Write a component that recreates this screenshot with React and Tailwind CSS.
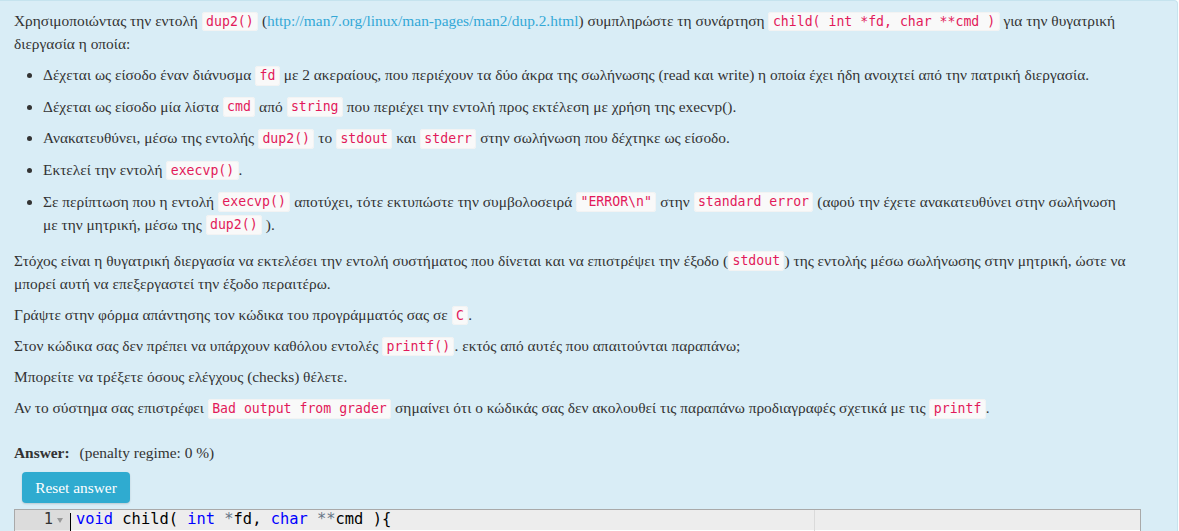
const C = ({ children }) => (
  <code className="whitespace-nowrap rounded-[3px] border border-[#f3f3f3] bg-[#f9f9f9] px-[3.4px] py-[1.4px] font-['DejaVu_Sans_Mono',monospace] text-[13.2px] leading-[14px] text-[#e2195a]">
    {children}
  </code>
);

const items = [
  <>
    Δέχεται ως είσοδο έναν διάνυσμα <C>fd</C> με 2 ακεραίους, που περιέχουν τα δύο άκρα της σωλήνωσης (read και write) η οποία έχει ήδη ανοιχτεί από την πατρική διεργασία.
  </>,
  <>
    Δέχεται ως είσοδο μία λίστα <C>cmd</C> από <C>string</C> που περιέχει την εντολή προς εκτέλεση με χρήση της execvp().
  </>,
  <>
    Ανακατευθύνει, μέσω της εντολής <C>dup2()</C> το <C>stdout</C> και <C>stderr</C> στην σωλήνωση που δέχτηκε ως είσοδο.
  </>,
  <>
    Εκτελεί την εντολή <C>execvp()</C>.
  </>,
  <>
    Σε περίπτωση που η εντολή <C>execvp()</C> αποτύχει, τότε εκτυπώστε την συμβολοσειρά <C>"ERROR\n"</C> στην <C>standard error</C> (αφού την έχετε ανακατευθύνει στην σωλήνωση με την μητρική, μέσω της <C>dup2()</C> ).
  </>,
];

const CodeEditor = () => (
  <div className="relative mt-[6px] h-[30px] w-[1127px] border-l border-t border-r border-[#a9a9a9] bg-white font-['DejaVu_Sans_Mono',monospace] text-[15.4px]">
    <div className="flex h-full">
      <div className="flex w-[55px] flex-col bg-[#ebebeb]">
        <div className="flex h-[19.5px] items-center justify-end bg-[#dcdcdc] pr-[4px] text-[#333]">
          <span className="leading-none">1</span>
          <svg width="12" height="10" viewBox="0 0 12 10" className="ml-[1px]">
            <path d="M3 3 L9 3 L6 8 Z" fill="#999" />
          </svg>
        </div>
      </div>
      <div className="relative flex-1">
        <div className="flex h-[19.5px] items-center bg-[#ededed] pl-[6px] leading-none text-black">
          <span className="text-[#0000ff]">void</span>
          <span className="whitespace-pre"> child( </span>
          <span className="text-[#0000ff]">int</span>
          <span className="whitespace-pre"> </span>
          <span className="text-[#687687]">*</span>
          <span className="whitespace-pre">fd, </span>
          <span className="text-[#0000ff]">char</span>
          <span className="whitespace-pre"> </span>
          <span className="text-[#687687]">**</span>
          <span className="whitespace-pre">cmd ){"{"}</span>
        </div>
        <div className="absolute left-0 top-[3px] h-[30px] w-px bg-black" />
        <div className="absolute left-[744px] top-0 h-full w-px bg-[#dadada]" />
      </div>
    </div>
  </div>
);

export default function App() {
  return (
    <div className="h-[531px] w-[1179px] overflow-hidden bg-white">
      <div className="h-[560px] w-[1178px] rounded-tr-[4px] border-r border-t border-[#c5e3ee] bg-[#d9edf6] pb-4 pl-[14px] pr-[48px] pt-[8px] font-['Liberation_Serif',serif] text-[15.4px] leading-[23.1px] text-[#333]">
        <p className="mb-[8px]">
          Χρησιμοποιώντας την εντολή <C>dup2()</C> (
          <a className="text-[#33a8d6]">http://man7.org/linux/man-pages/man2/dup.2.html</a>) συμπληρώστε τη συνάρτηση{" "}
          <C>child( int *fd, char **cmd )</C> για την θυγατρική διεργασία η οποία:
        </p>
        <ul className="mb-[13px] ml-[29px] list-disc">
          {items.map((it, i) => (
            <li key={i} className={i === items.length - 1 ? "" : "mb-[8.5px]"}>
              {it}
            </li>
          ))}
        </ul>
        <p className="mb-[8px]">
          Στόχος είναι η θυγατρική διεργασία να εκτελέσει την εντολή συστήματος που δίνεται και να επιστρέψει την έξοδο (<C>stdout</C>) της εντολής μέσω σωλήνωσης στην μητρική, ώστε να μπορεί αυτή να επεξεργαστεί την έξοδο περαιτέρω.
        </p>
        <p className="mb-[8px]">
          Γράψτε στην φόρμα απάντησης τον κώδικα του προγράμματός σας σε <C>C</C>.
        </p>
        <p className="mb-[8px]">
          Στον κώδικα σας δεν πρέπει να υπάρχουν καθόλου εντολές <C>printf()</C>. εκτός από αυτές που απαιτούνται παραπάνω;
        </p>
        <p className="mb-[8px]">Μπορείτε να τρέξετε όσους ελέγχους (checks) θέλετε.</p>
        <p>
          Αν το σύστημα σας επιστρέφει <C>Bad output from grader</C> σημαίνει ότι ο κώδικάς σας δεν ακολουθεί τις παραπάνω προδιαγραφές σχετικά με τις <C>printf</C>.
        </p>
        <div className="mt-[21.5px]">
          <span className="font-bold">Answer:</span>
          <span className="ml-[10px]">(penalty regime: 0 %)</span>
        </div>
        <button className="ml-[8px] mt-[8.5px] h-[31px] w-[108px] rounded-[4px] bg-[#2fabd0] text-[15.4px] text-white shadow-[0_1px_2px_rgba(0,0,0,0.15)]">
          Reset answer
        </button>
        <CodeEditor />
      </div>
    </div>
  );
}
